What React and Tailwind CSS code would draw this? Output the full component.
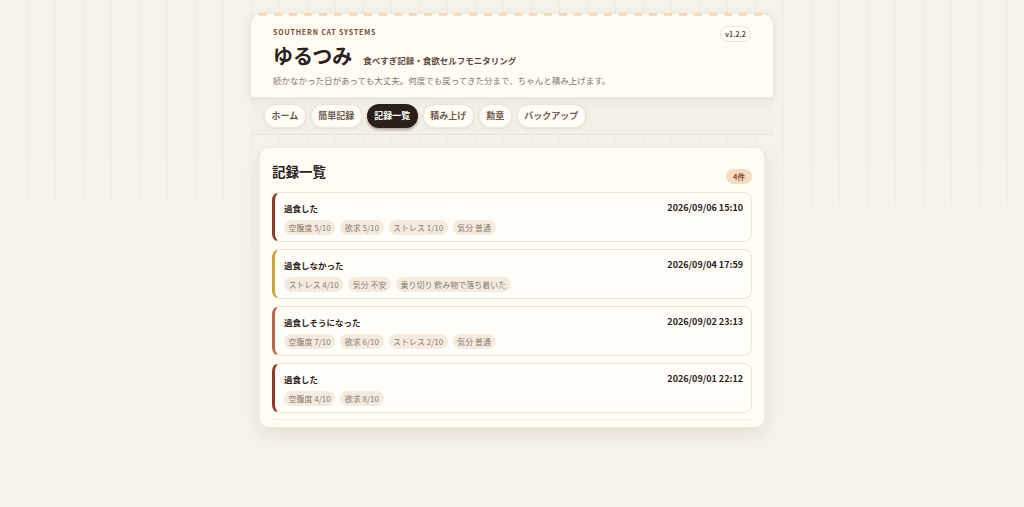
import React from "react";

const entries = [
  {
    title: "過食した",
    date: "2026/09/06 15:10",
    bar: "border-l-[#8e3b2b]",
    tags: ["空腹度 5/10", "欲求 5/10", "ストレス 1/10", "気分 普通"],
  },
  {
    title: "過食しなかった",
    date: "2026/09/04 17:59",
    bar: "border-l-[#c9a441]",
    tags: ["ストレス 4/10", "気分 不安", "乗り切り 飲み物で落ち着いた"],
  },
  {
    title: "過食しそうになった",
    date: "2026/09/02 23:13",
    bar: "border-l-[#b8694b]",
    tags: ["空腹度 7/10", "欲求 6/10", "ストレス 2/10", "気分 普通"],
  },
  {
    title: "過食した",
    date: "2026/09/01 22:12",
    bar: "border-l-[#8e3b2b]",
    tags: ["空腹度 4/10", "欲求 8/10"],
  },
];

const tabs = ["ホーム", "簡単記録", "記録一覧", "積み上げ", "勲章", "バックアップ"];

export default function App() {
  return (
    <div
      className="min-h-screen w-full bg-[#f6f2ea] bg-[linear-gradient(to_bottom,rgba(246,242,234,0)_0%,rgba(246,242,234,0.6)_55%,#f6f2ea_85%),repeating-linear-gradient(90deg,transparent_0px,transparent_27px,#f0eadf_27px,#f0eadf_28px)]"
      style={{ fontFamily: '"Noto Sans CJK JP", "Noto Sans", sans-serif' }}
    >
      <div className="mx-auto w-[524px] pt-[13px]">
        {/* Header card */}
        <div className="relative rounded-t-[12px] rounded-b-[4px] bg-[#fffcf4] border border-[#f0e9dc] shadow-[0_2px_10px_rgba(120,90,60,0.10)] pl-[22px] pr-[22px] pt-[12px] pb-[11px]">
          <div className="absolute left-[8px] right-[6px] top-[-1px] h-[3px] bg-[repeating-linear-gradient(90deg,#f2dcbc_0px,#f2dcbc_8px,transparent_8px,transparent_15px)]" />
          <div className="flex items-start justify-between">
            <div className="text-[7px] font-bold tracking-[0.12em] text-[#7b4a32] leading-none mt-[3px]">
              SOUTHERN CAT SYSTEMS
            </div>
            <div className="rounded-full border border-[#ece3d5] bg-[#fffdf8] px-[4px] py-[2px] text-[7px] font-bold text-[#5b4a40] leading-[10px]">
              v1.2.2
            </div>
          </div>
          <div className="flex items-baseline gap-[11px]">
            <div className="text-[20px] font-bold text-[#2b211c] leading-[28px]">ゆるつみ</div>
            <div className="text-[8.5px] font-bold text-[#5a4a40]">食べすぎ記録・食欲セルフモニタリング</div>
          </div>
          <div className="mt-[4px] text-[8.5px] text-[#85776a] leading-[12px]">
            続かなかった日があっても大丈夫。何度でも戻ってきた分まで、ちゃんと積み上げます。
          </div>
        </div>

        {/* Nav */}
        <div className="flex items-center gap-[5px] bg-[#f4f0e8] border-b border-[#ebe4d8] px-[14px] py-[6px]">
          {tabs.map((t) => {
            const active = t === "記録一覧";
            return (
              <div
                key={t}
                className={
                  active
                    ? "h-[24px] flex items-center rounded-full bg-[#2b1f1a] px-[7.5px] text-[9px] font-bold text-white shadow-[0_2px_3px_rgba(60,30,20,0.35)]"
                    : "h-[24px] flex items-center rounded-full bg-[#fffcf5] border border-[#efe7da] px-[6.5px] text-[9px] font-bold text-[#6b5a4e] shadow-[0_1px_3px_rgba(120,90,60,0.12)]"
                }
              >
                {t}
              </div>
            );
          })}
        </div>

        {/* Main card */}
        <div className="mx-[9px] mt-[12px] rounded-[10px] bg-[#fffcf4] border border-[#f0e9dc] shadow-[0_6px_18px_rgba(120,90,60,0.12)] px-[12px] pt-[12px] pb-[7px]">
          <div className="flex items-end justify-between">
            <div className="text-[13.5px] font-bold text-[#2b211c] leading-[22px]">記録一覧</div>
            <div className="mb-[-2px] rounded-full bg-[#f4dcc0] px-[7px] text-[7.5px] font-bold text-[#8a4a2a] leading-[15px]">
              4件
            </div>
          </div>
          <div className="mt-[10px] flex flex-col gap-[7px] pb-[6px] border-b border-dotted border-[#eee6d9]">
            {entries.map((e, i) => (
              <div
                key={i}
                className={`rounded-[8px] border border-[#eee6d8] border-l-[3px] ${e.bar} bg-[#fffdf7] pl-[9px] pr-[8px] pt-[8px] pb-[6px]`}
              >
                <div className="flex items-center justify-between">
                  <div className="text-[8.5px] font-bold text-[#2b211c] leading-[14px]">{e.title}</div>
                  <div className="text-[9px] font-bold text-[#2b211c] leading-[14px]">{e.date}</div>
                </div>
                <div className="mt-[5px] flex gap-[5px]">
                  {e.tags.map((t) => (
                    <div
                      key={t}
                      className="rounded-full bg-[#f4ebe0] px-[4.5px] text-[8px] text-[#8c7a6a] leading-[15px]"
                    >
                      {t}
                    </div>
                  ))}
                </div>
              </div>
            ))}
          </div>
        </div>
      </div>
    </div>
  );
}
